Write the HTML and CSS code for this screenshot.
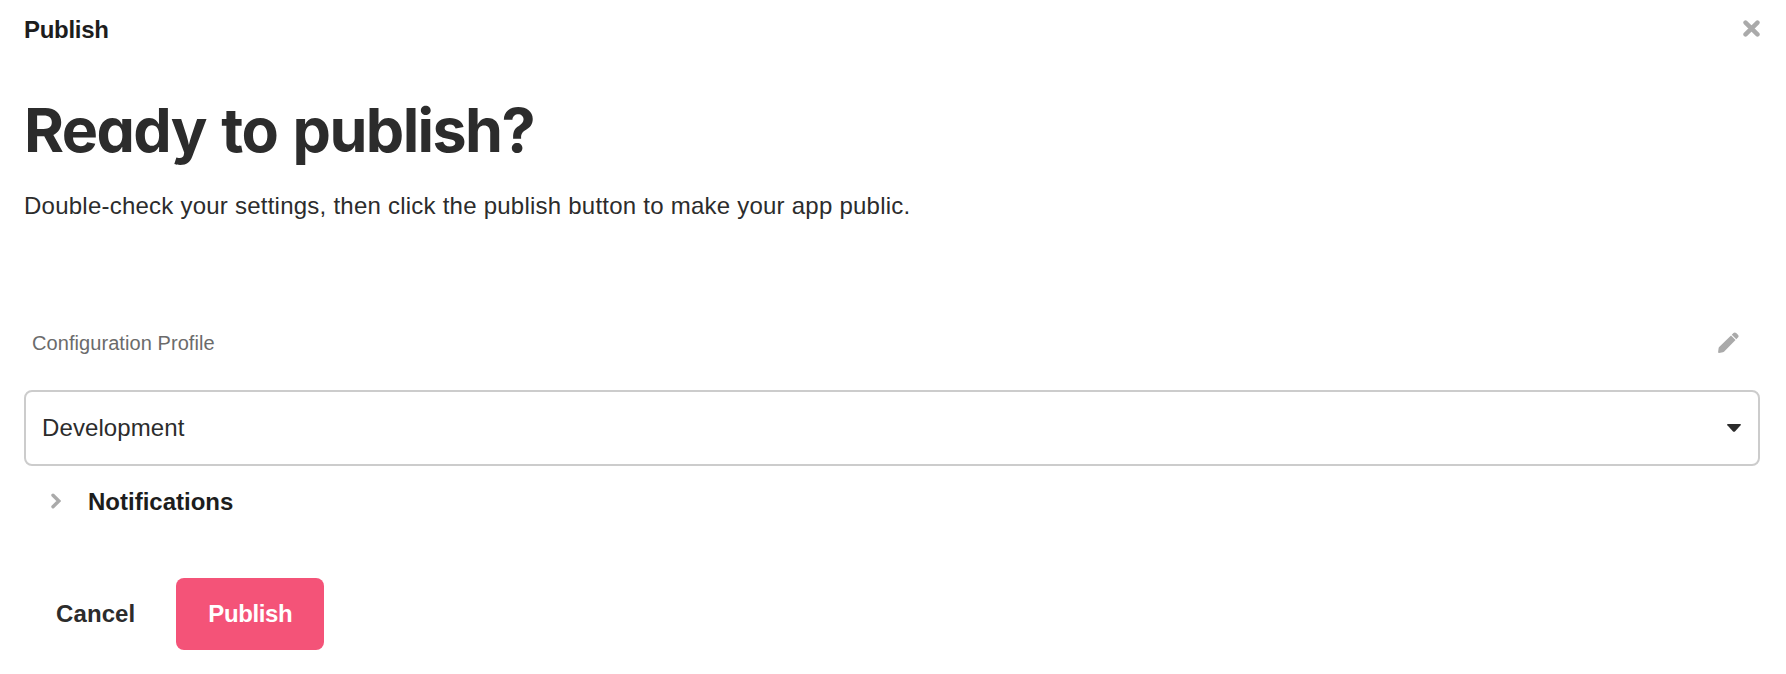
FILE: index.html
```html
<!DOCTYPE html>
<html lang="en">
<head>
<meta charset="utf-8">
<title>Publish</title>
<link rel="stylesheet" href="styles.css">
</head>
<body>
<main class="dialog">
  <header class="dialog-header">
    <span class="dialog-title">Publish</span>
    <button class="icon-button close" aria-label="Close">
      <svg width="17" height="17" viewBox="0 0 16 16"><path d="M2.400 2.400l11.200 11.200M13.600 2.400L2.400 13.600" stroke="#aaa" stroke-width="4.200" stroke-linecap="round"/></svg>
    </button>
  </header>
  <h1 class="heading">Ready to publish?</h1>
  <p class="lead">Double-check your settings, then click the publish button to make your app public.</p>
  <div class="field-header">
    <span class="field-label">Configuration Profile</span>
    <button class="icon-button edit" aria-label="Edit profile">
      <svg width="21" height="21" viewBox="0 0 20 20" fill="#aaa"><path d="M12.400 3.400l4.300 4.300L5.700 18.900q-.4.400-1 .5L1 19.900Q.1 20 .1 19l.5-3.700q.1-.6.500-1zM13.100 2.700L14.700 1q1.300-1.200 2.600 0l1.700 1.700q1.200 1.300 0 2.600l-1.600 1.700z"/></svg>
    </button>
  </div>
  <div class="select" role="combobox" aria-expanded="false">
    <span>Development</span>
    <svg width="14" height="8" viewBox="0 0 14 8"><path d="M.8 0h12.400q1.200.2.400 1.200L8.200 7.200q-1.200 1.100-2.400 0L.4 1.200Q-.4.200.8 0z" fill="#2c2c2c"/></svg>
  </div>
  <div class="disclosure">
    <svg width="10" height="16" viewBox="0 0 10 16" fill="none"><path d="M2 2.200L7.800 8 2 13.800" stroke="#aaa" stroke-width="3.400" stroke-linecap="round"/></svg>
    <span>Notifications</span>
  </div>
  <footer class="actions">
    <button class="button">Cancel</button>
    <button class="button primary">Publish</button>
  </footer>
</main>
</body>
</html>
```
FILE: styles.css
```css
* { box-sizing: border-box; }
body {
  margin: 0;
  background: #fff;
  color: #2c2c2c;
  font: 24px/36px "Liberation Sans", Arial, sans-serif;
}
.dialog { padding: 12px 26px 0 24px; }
.dialog-header {
  display: flex;
  align-items: center;
  justify-content: space-between;
  height: 36px;
}
.dialog-title {
  color: #1d1d1d;
  font-weight: 700;
  letter-spacing: -0.3px;
}
.icon-button {
  display: flex;
  padding: 0;
  border: 0;
  background: none;
}
.close { margin: 0 0 3px; }
.edit { margin-bottom: 1px; }
.heading {
  margin: 46px 0 0;
  color: #2c2c2c;
  font: 700 61px/72px Inter, sans-serif;
  font-feature-settings: "cv11";
  letter-spacing: -1.6px;
  word-spacing: 2.5px;
}
.lead { margin: 22px 0 0; letter-spacing: 0.235px; }
.field-header {
  display: flex;
  align-items: center;
  justify-content: space-between;
  height: 30px;
  margin-top: 104px;
  padding: 0 21px 0 8px;
}
.field-label {
  color: #6b6b6b;
  font-size: 20px;
  line-height: 30px;
  letter-spacing: 0.07px;
}
.select {
  display: flex;
  align-items: center;
  justify-content: space-between;
  height: 76px;
  margin-top: 32px;
  padding: 0 17px 0 16px;
  border: 2px solid #ccc;
  border-radius: 8px;
  letter-spacing: 0.1px;
}
.disclosure {
  display: flex;
  align-items: center;
  gap: 27px;
  margin-top: 18px;
  padding-left: 27px;
  color: #1d1d1d;
  font-weight: 700;
}
.disclosure svg { margin-bottom: 2px; }
.actions { display: flex; gap: 9px; margin-top: 58px; }
.button {
  height: 72px;
  padding: 0 32px;
  border: 0;
  border-radius: 8px;
  background: none;
  color: #2c2c2c;
  font: 700 24px/36px "Liberation Sans", Arial, sans-serif;
  letter-spacing: 0.1px;
}
.primary {
  background: #f45378;
  color: #fff;
  letter-spacing: -0.4px;
}
```
